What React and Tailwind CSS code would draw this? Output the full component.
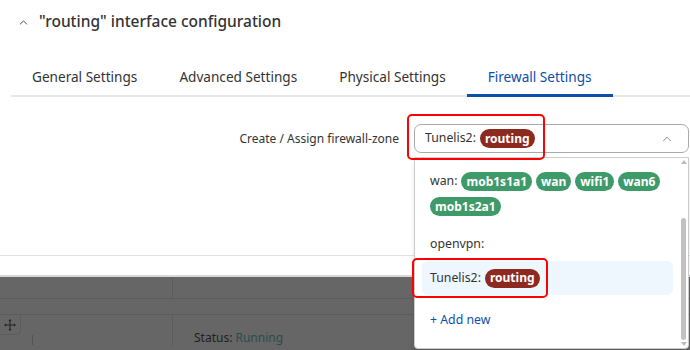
import { ChevronUp } from "lucide-react";

const greenPills = ["mob1s1a1", "wan", "wifi1", "wan6", "mob1s2a1"];

function Pill({ children, red }) {
  return (
    <span
      className={`inline-flex h-[19px] items-center rounded-full px-[5px] text-[12px] font-bold leading-none text-white ${
        red ? "bg-[#8c2a1f]" : "bg-[#3e9a69]"
      }`}
    >
      {children}
    </span>
  );
}

function MoveIcon() {
  return (
    <svg width="12" height="12" viewBox="0 0 12 12" fill="#222">
      <rect x="5.5" y="1" width="1" height="10" />
      <rect x="1" y="5.5" width="10" height="1" />
      <path d="M6 0 L7.5 2 L4.5 2 Z" />
      <path d="M6 12 L7.5 10 L4.5 10 Z" />
      <path d="M0 6 L2 4.5 L2 7.5 Z" />
      <path d="M12 6 L10 4.5 L10 7.5 Z" />
    </svg>
  );
}

export default function App() {
  return (
    <div
      className="relative h-[350px] w-[690px] overflow-hidden bg-white text-[#333]"
      style={{ fontFamily: '"Noto Sans", "Open Sans", sans-serif' }}
    >
      {/* header */}
      <div className="flex h-[44px] items-center gap-[9px] pl-[17px]">
        <ChevronUp size={13} strokeWidth={1.75} className="text-[#444]" />
        <h2 className="text-[15.5px] font-medium text-[#333]">
          "routing" interface configuration
        </h2>
      </div>

      {/* tabs */}
      <div className="ml-[11px] mt-[18px] flex h-[35px] border-b-2 border-[#e6e6e6] text-[13.6px]">
        <div className="px-[21px] pt-[5px] text-[#333]">General Settings</div>
        <div className="px-[21px] pt-[5px] text-[#333]">Advanced Settings</div>
        <div className="px-[21px] pt-[5px] text-[#333]">Physical Settings</div>
        <div className="-mb-[2px] border-b-[3px] border-[#0d4fa6] px-[21px] pt-[5px] text-[#0d4fa6]">
          Firewall Settings
        </div>
      </div>

      {/* form row */}
      <div className="mt-[27px] flex items-center">
        <div className="w-[414px] pr-[15px] text-right text-[12px] text-[#333]">
          Create / Assign firewall-zone
        </div>
        <div className="flex h-[29px] w-[275px] items-center rounded-[7px] border border-[#aaa] pl-[10px] pr-[14px]">
          <span className="mr-[4px] text-[12.3px]">Tunelis2:</span>
          <Pill red>routing</Pill>
          <ChevronUp size={14} strokeWidth={1.5} className="ml-auto text-[#777]" />
        </div>
      </div>

      {/* page content below */}
      <div className="mt-[102px] border-t border-[#e2e2e2]" />
      <div className="mt-[19px] h-[2px] bg-[#d8d8d8]" />
      <div className="h-[100px] bg-[#666]">
        <div className="grid h-[22px] grid-cols-[173px_1fr] border-b border-[#5c5c5c]">
          <div className="border-r border-[#5c5c5c]" />
          <div />
        </div>
        <div className="grid h-[16px] grid-cols-[173px_1fr] border-b border-[#5c5c5c]" />
        <div className="grid grid-cols-[173px_1fr]">
          <div className="border-r border-[#5c5c5c]">
            <div className="flex h-[20px] w-[21px] items-center justify-center rounded-br-[5px] border-b border-r border-[#5c5c5c]">
              <MoveIcon />
            </div>
            <div className="ml-[32px] h-[10px] border-l border-[#555]" />
          </div>
          <div className="pl-[21px] pt-[14px] text-[12px] text-[#1f1f1f]">
            Status: <span className="text-[#2a4d48]">Running</span>
          </div>
        </div>
      </div>

      {/* dropdown menu */}
      <div className="absolute left-[414px] top-[157px] h-[192px] w-[275px] rounded-b-[4px] border border-[#ccc] bg-white shadow-md">
        <div className="flex h-full">
          <div className="flex-1 pl-[7px] pr-[6px] pt-[14px] text-[12.3px]">
            <div className="flex flex-wrap items-center gap-x-[4px] gap-y-[6px] px-[8px]">
              <span>wan:</span>
              {greenPills.map((p) => (
                <Pill key={p}>{p}</Pill>
              ))}
            </div>
            <div className="mt-[19px] px-[8px]">openvpn:</div>
            <div className="mt-[8px] flex h-[34px] items-center gap-[4px] rounded-[6px] bg-[#eef6fe] px-[8px]">
              <span>Tunelis2:</span>
              <Pill red>routing</Pill>
            </div>
            <div className="mt-[16px] px-[8px] text-[#0d4fa6]">+ Add new</div>
          </div>
          <div className="flex w-[9px] flex-col items-center py-[2px]">
            <div className="h-0 w-0 border-x-[3px] border-b-[4px] border-x-transparent border-b-[#bbb]" />
            <div className="mt-[54px] h-[122px] w-[5px] rounded-full bg-[#c1c1c1]" />
            <div className="mt-auto h-0 w-0 border-x-[3px] border-t-[4px] border-x-transparent border-t-[#bbb]" />
          </div>
        </div>
      </div>

      {/* red annotation boxes */}
      <div className="absolute left-[407px] top-[114px] h-[46px] w-[138px] rounded-[5px] border-2 border-[#f00]" />
      <div className="absolute left-[412px] top-[258px] h-[40px] w-[136px] rounded-[5px] border-2 border-[#f00]" />
    </div>
  );
}
